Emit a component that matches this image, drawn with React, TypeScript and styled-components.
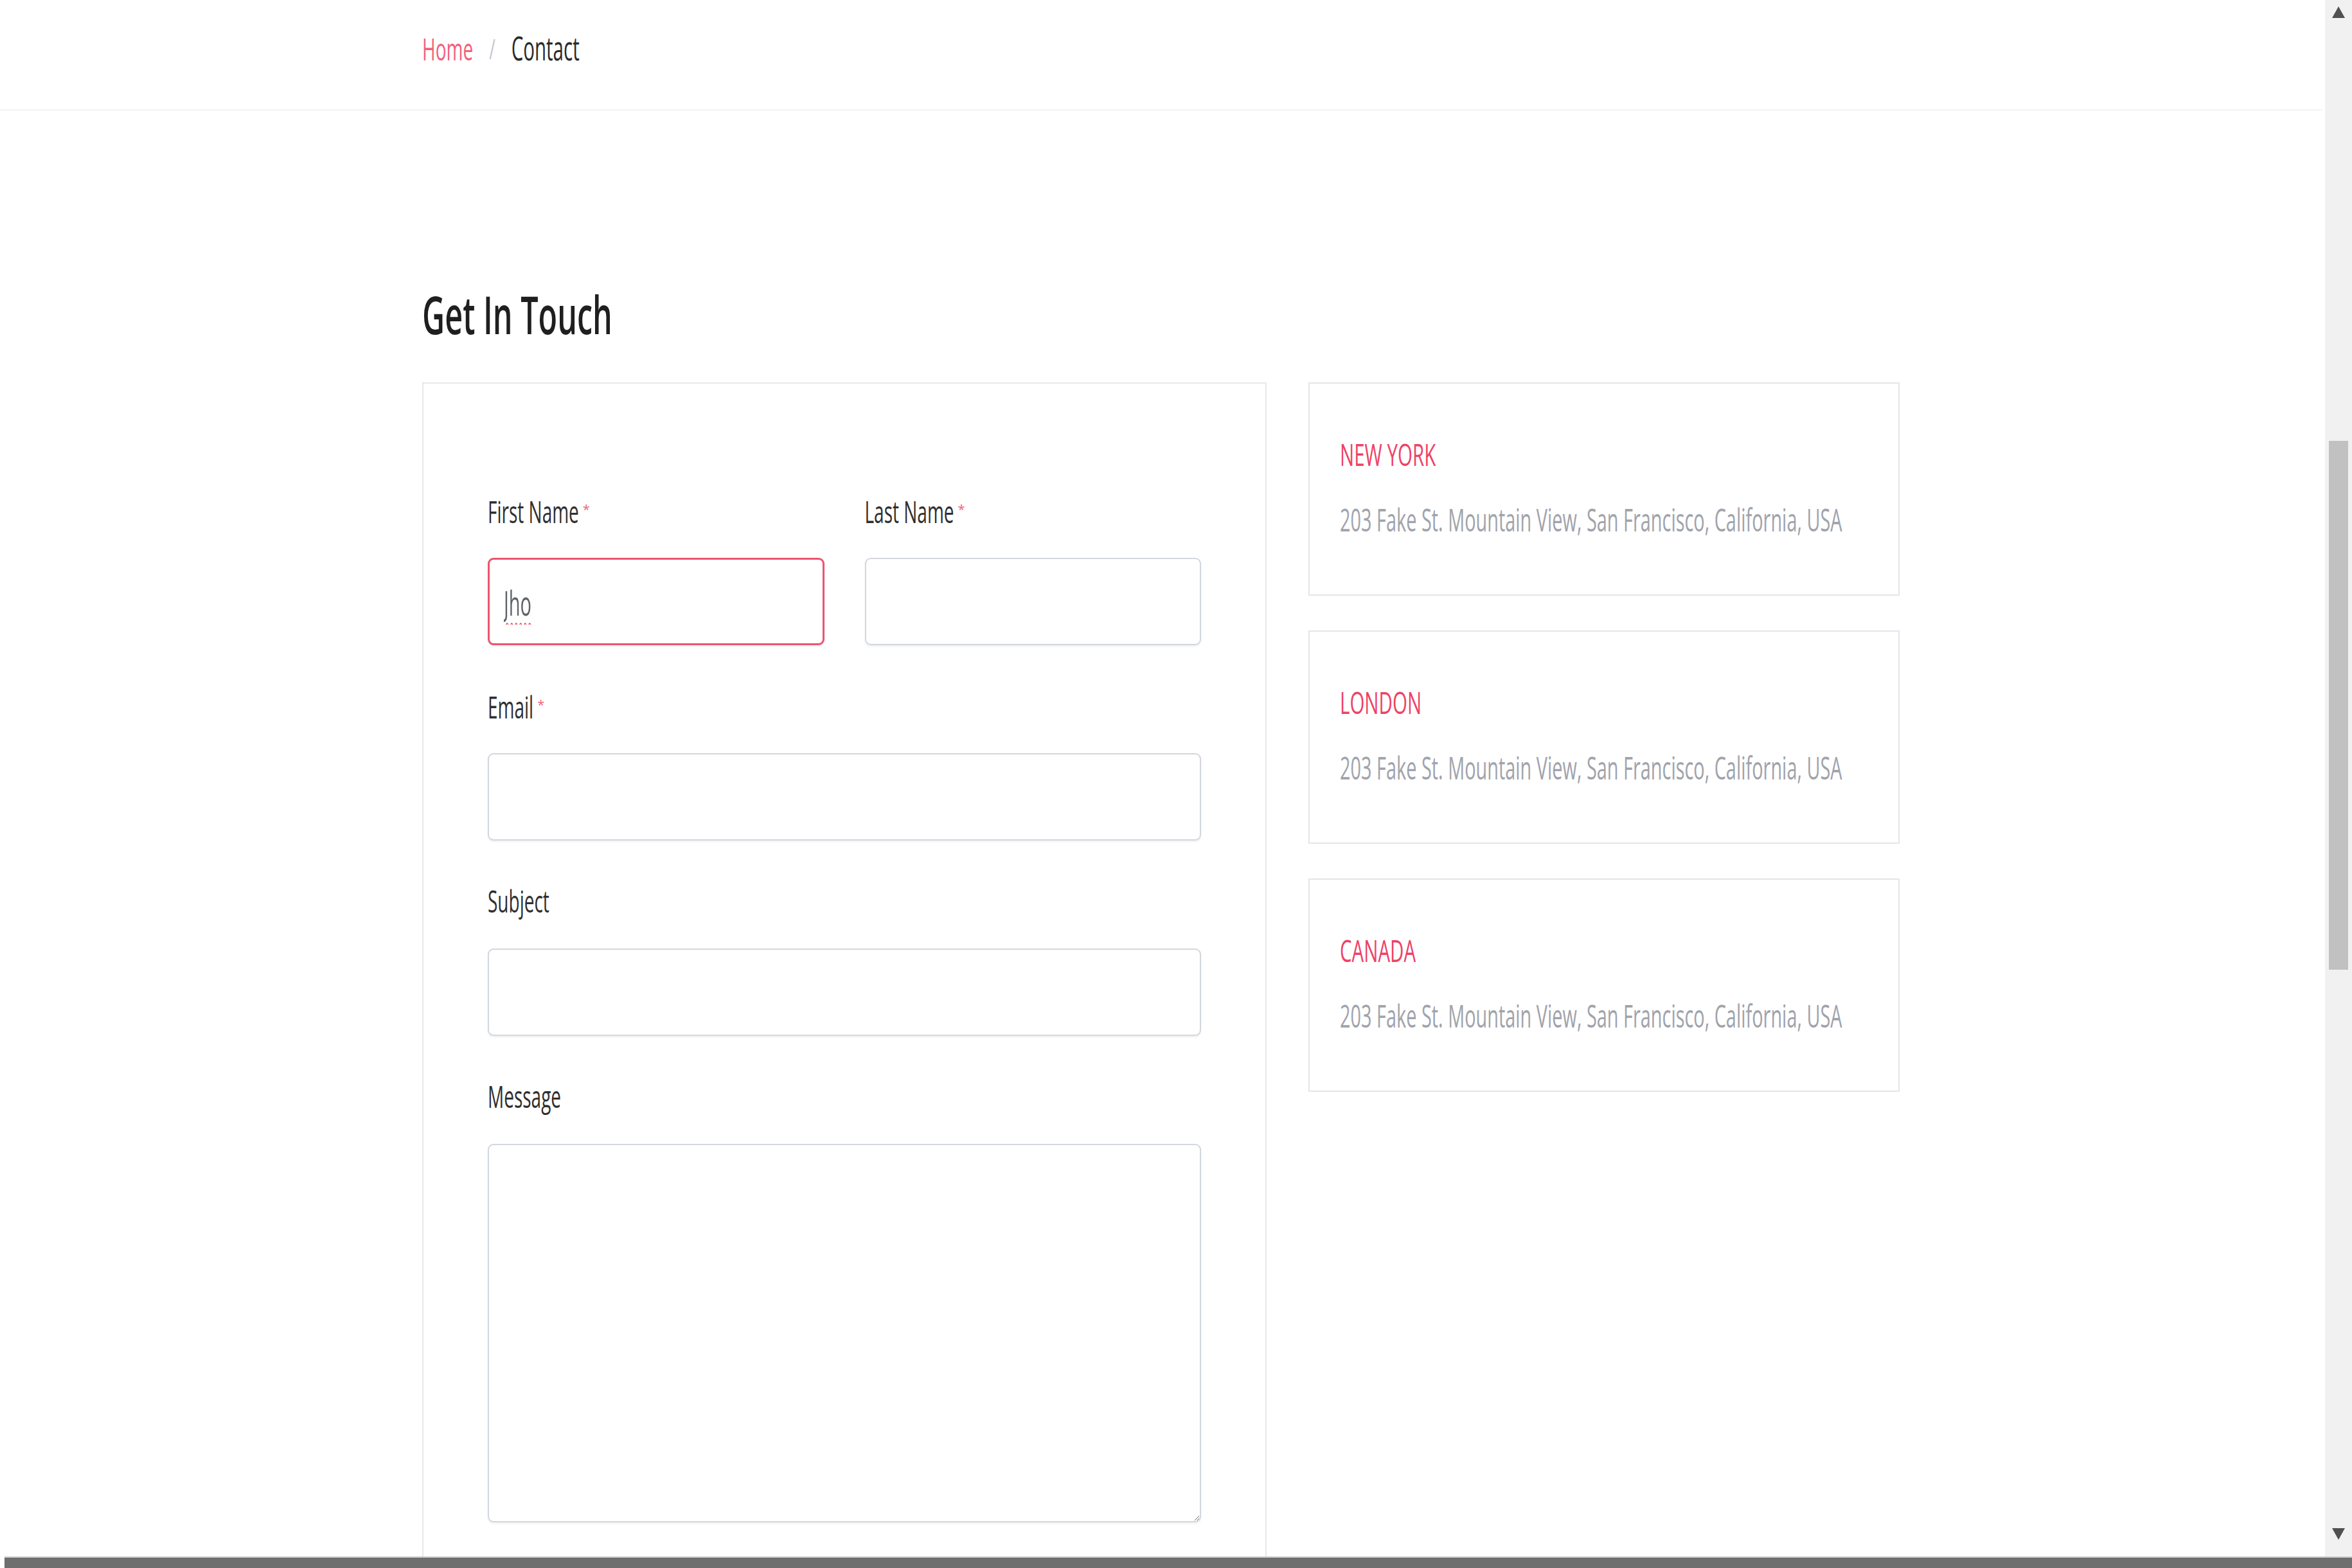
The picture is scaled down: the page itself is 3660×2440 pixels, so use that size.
import React, { useState } from "react";
import styled, { createGlobalStyle, css } from "styled-components";

const GlobalStyle = createGlobalStyle`
  html, body {
    margin: 0;
    padding: 0;
    background: #ffffff;
    overflow: hidden;
  }
  body {
    font-family: "Open Sans", "Noto Sans", "Liberation Sans", sans-serif;
    color: #333333;
  }
  * { box-sizing: border-box; }
`;

const tall = css`
  display: inline-block;
  transform: scaleY(1.72);
  transform-origin: 50% 50%;
`;

const Page = styled.div`
  padding-right: 46px;
  min-height: 2440px;
`;

const Container = styled.div`
  width: 2300px;
  margin: 0 auto;
`;

const Header = styled.header`
  height: 172px;
  padding-top: 55px;
  border-bottom: 2px solid #f4f4f5;
`;

const Breadcrumb = styled.nav`
  display: flex;
  align-items: center;
  gap: 25px;
  height: 40px;
  font-size: 28px;
  line-height: 40px;
`;

const Crumb = styled.span<{ $active?: boolean }>`
  ${tall};
  color: ${(p) => (p.$active ? "#2a2a2a" : "#f2607c")};
  font-size: ${(p) => (p.$active ? "29.5px" : "28px")};
`;

const Sep = styled.span`
  ${tall};
  color: #c3c7cf;
  font-size: 26px;
`;

const Main = styled.main`
  padding-top: 276px;
`;

const Title = styled.h2`
  margin: 0 0 67px;
  height: 80px;
  font-size: 48.5px;
  line-height: 80px;
  font-weight: 600;
  color: #1f1f1f;
  span { ${tall}; transform: scaleY(1.68); }
`;

const Grid = styled.div`
  display: grid;
  grid-template-columns: 1314px 920px;
  gap: 65px;
  align-items: start;
`;

const FormCard = styled.form`
  border: 2px solid #e6e8ec;
  padding: 176px 100px 120px;
  display: flex;
  flex-direction: column;
  gap: 73px;
`;

const Row = styled.div`
  display: grid;
  grid-template-columns: 1fr 1fr;
  gap: 63px;
`;

const Group = styled.div`
  display: flex;
  flex-direction: column;
  gap: 55px;
`;

const Label = styled.label`
  height: 40px;
  line-height: 40px;
  font-size: 28px;
  color: #2f2f2f;
  > span { ${tall}; }
`;

const Req = styled.sup`
  color: #f0607a;
  font-size: 20px;
  margin-left: 6px;
  vertical-align: 6px;
`;

const FieldBox = styled.div<{ $focused?: boolean }>`
  height: 136px;
  border: ${(p) => (p.$focused ? "3px solid #ec5470" : "2px solid #d3d7de")};
  border-radius: 9px;
  box-shadow: 0 2px 3px rgba(40, 50, 70, 0.08);
  display: flex;
  align-items: center;
  padding: 0 22px;
  background: #fff;
`;

const Input = styled.input`
  width: 100%;
  height: 44px;
  border: 0;
  outline: none;
  padding: 0;
  background: transparent;
  font-family: inherit;
  font-size: 29px;
  color: #5f6368;
  caret-color: #222;
  text-decoration: underline wavy #e8424f;
  text-decoration-thickness: 1px;
  text-underline-offset: 6px;
  transform: scaleY(1.8);
`;

const TextArea = styled.textarea`
  height: 589px;
  border: 2px solid #d3d7de;
  border-radius: 9px;
  box-shadow: 0 2px 3px rgba(40, 50, 70, 0.08);
  resize: both;
  font-family: inherit;
  font-size: 28px;
  outline: none;
`;

const Side = styled.div`
  display: flex;
  flex-direction: column;
  gap: 54px;
`;

const InfoCard = styled.div`
  border: 2px solid #e3e5ea;
  padding: 90px 47px 97px;
  display: flex;
  flex-direction: column;
  gap: 61px;
`;

const City = styled.h4`
  margin: 0;
  height: 40px;
  line-height: 40px;
  font-size: 29.5px;
  font-weight: 400;
  color: #ee4266;
  span { ${tall}; transform: scaleY(1.6); }
`;

const Address = styled.p`
  margin: 0;
  height: 40px;
  line-height: 40px;
  font-size: 28.9px;
  color: #a0a3ac;
  span { ${tall}; }
`;

const Scrollbar = styled.div`
  position: fixed;
  top: 0;
  right: 0;
  width: 42px;
  height: 2422px;
  background: #f1f1f1;
`;

const ScrollArrow = styled.div<{ $dir: "up" | "down" }>`
  position: absolute;
  left: 11px;
  width: 0;
  height: 0;
  border-left: 10px solid transparent;
  border-right: 10px solid transparent;
  ${(p) =>
    p.$dir === "up"
      ? css`top: 10px; border-bottom: 18px solid #505050;`
      : css`top: 2378px; border-top: 18px solid #505050;`}
`;

const ScrollThumb = styled.div`
  position: absolute;
  top: 686px;
  left: 6px;
  width: 30px;
  height: 823px;
  background: #c1c1c1;
`;

const BottomBar = styled.div`
  position: fixed;
  left: 7px;
  right: 0;
  bottom: 0;
  height: 18px;
  background: #6e6e6e;
  border-top: 2px solid #cacaca;
`;

const offices = ["NEW YORK", "LONDON", "CANADA"];
const address = "203 Fake St. Mountain View, San Francisco, California, USA";

export default function App() {
  const [first, setFirst] = useState("Jho");
  return (
    <>
      <GlobalStyle />
      <Page>
        <Header>
          <Container>
            <Breadcrumb>
              <Crumb>Home</Crumb>
              <Sep>/</Sep>
              <Crumb $active>Contact</Crumb>
            </Breadcrumb>
          </Container>
        </Header>
        <Main>
          <Container>
            <Title>
              <span>Get In Touch</span>
            </Title>
            <Grid>
              <FormCard onSubmit={(e) => e.preventDefault()}>
                <Row>
                  <Group>
                    <Label htmlFor="first">
                      <span>First Name</span>
                      <Req>*</Req>
                    </Label>
                    <FieldBox $focused>
                      <Input
                        id="first"
                        autoFocus
                        value={first}
                        onChange={(e) => setFirst(e.target.value)}
                      />
                    </FieldBox>
                  </Group>
                  <Group>
                    <Label htmlFor="last">
                      <span>Last Name</span>
                      <Req>*</Req>
                    </Label>
                    <FieldBox>
                      <Input id="last" />
                    </FieldBox>
                  </Group>
                </Row>
                <Group>
                  <Label htmlFor="email">
                    <span>Email</span>
                    <Req>*</Req>
                  </Label>
                  <FieldBox>
                    <Input id="email" type="email" />
                  </FieldBox>
                </Group>
                <Group>
                  <Label htmlFor="subject">
                    <span>Subject</span>
                  </Label>
                  <FieldBox>
                    <Input id="subject" />
                  </FieldBox>
                </Group>
                <Group>
                  <Label htmlFor="message">
                    <span>Message</span>
                  </Label>
                  <TextArea id="message" />
                </Group>
              </FormCard>
              <Side>
                {offices.map((o) => (
                  <InfoCard key={o}>
                    <City>
                      <span>{o}</span>
                    </City>
                    <Address>
                      <span>{address}</span>
                    </Address>
                  </InfoCard>
                ))}
              </Side>
            </Grid>
          </Container>
        </Main>
      </Page>
      <Scrollbar>
        <ScrollArrow $dir="up" />
        <ScrollThumb />
        <ScrollArrow $dir="down" />
      </Scrollbar>
      <BottomBar />
    </>
  );
}
